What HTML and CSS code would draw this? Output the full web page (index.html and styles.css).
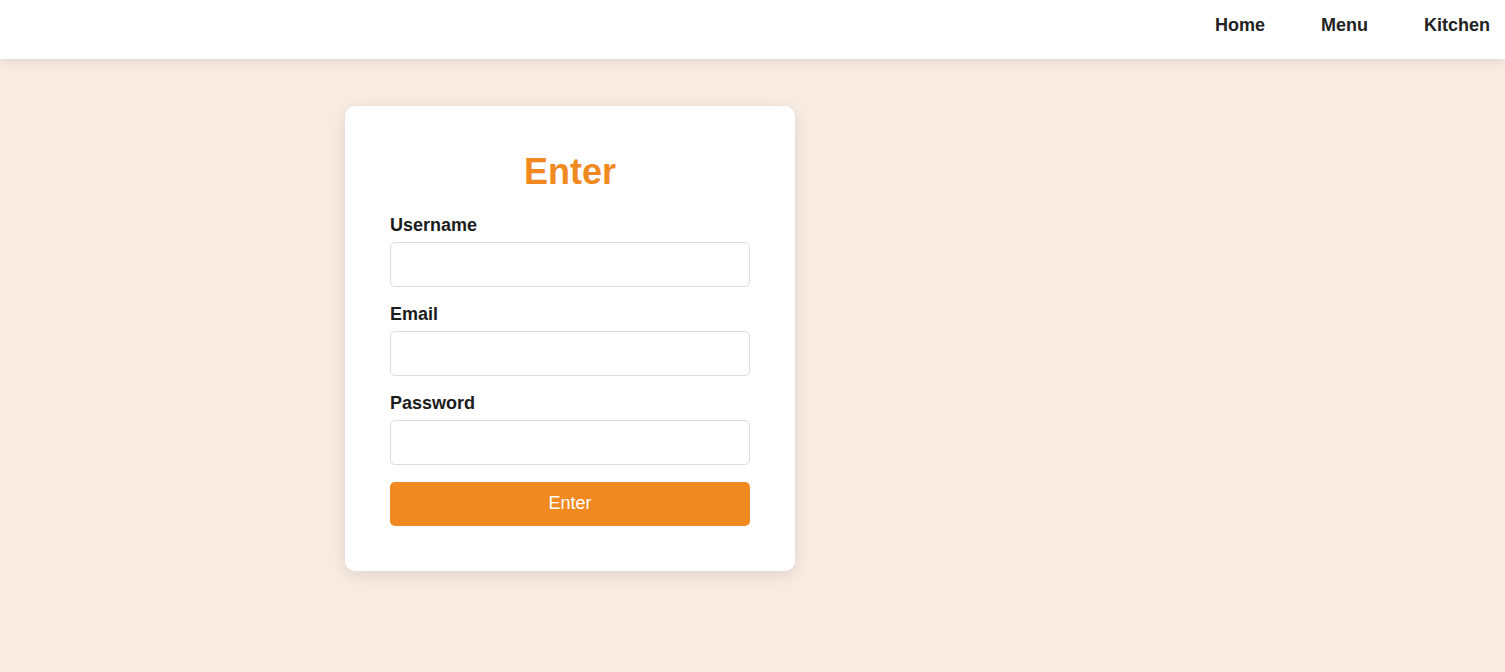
FILE: index.html
```html
<!DOCTYPE html>
<html lang="en">
<head>
<meta charset="utf-8">
<title>Enter</title>
<link rel="stylesheet" href="styles.css">
</head>
<body>
<header class="topbar">
  <nav class="nav">
    <a class="nav-link" href="#">Home</a>
    <a class="nav-link" href="#">Menu</a>
    <a class="nav-link" href="#">Kitchen</a>
  </nav>
</header>
<main class="main">
  <div class="card">
    <h2 class="title">Enter</h2>
    <form class="form">
      <div class="field">
        <label class="label" for="u">Username</label>
        <input class="input" id="u" type="text">
      </div>
      <div class="field">
        <label class="label" for="e">Email</label>
        <input class="input" id="e" type="email">
      </div>
      <div class="field">
        <label class="label" for="p">Password</label>
        <input class="input" id="p" type="password">
      </div>
      <button class="btn" type="button">Enter</button>
    </form>
  </div>
</main>
</body>
</html>
```
FILE: styles.css
```css
* { box-sizing: border-box; }
html, body { margin: 0; padding: 0; }
body {
  background: #f8ebe2;
  font-family: "Liberation Sans", Arial, sans-serif;
  color: #1c1c1c;
  min-height: 672px;
}
.topbar {
  height: 59px;
  background: #ffffff;
  box-shadow: 0 2px 10px rgba(0, 0, 0, 0.1);
  display: flex;
  justify-content: flex-end;
  align-items: flex-start;
  padding: 15px 15px 0 0;
  position: relative;
  z-index: 1;
}
.nav { display: flex; gap: 56px; }
.nav-link {
  font-size: 18px;
  font-weight: bold;
  color: #222222;
  text-decoration: none;
  line-height: 21px;
}
.main {
  padding: 47px 0 0 345px;
}
.card {
  width: 450px;
  background: #ffffff;
  border-radius: 10px;
  box-shadow: 0 4px 15px rgba(0, 0, 0, 0.1);
  padding: 45px 45px 45px;
}
.title {
  margin: 0 0 23px;
  text-align: center;
  color: #f0891f;
  font-size: 36px;
  font-weight: bold;
  line-height: 41px;
}
.form { display: flex; flex-direction: column; }
.field { display: flex; flex-direction: column; margin-bottom: 17px; }
.label {
  font-size: 18px;
  font-weight: bold;
  line-height: 21px;
  margin-bottom: 6px;
  color: #1c1c1c;
}
.input {
  height: 45px;
  width: 100%;
  border: 1px solid #dddddd;
  border-radius: 5px;
  background: #ffffff;
  font-family: inherit;
  font-size: 16px;
  padding: 0 10px;
}
.btn {
  height: 44px;
  width: 100%;
  border: none;
  border-radius: 5px;
  background: #f0891f;
  color: #ffffff;
  font-family: inherit;
  font-size: 18px;
  padding: 0 0 2px;
  cursor: pointer;
}
```
